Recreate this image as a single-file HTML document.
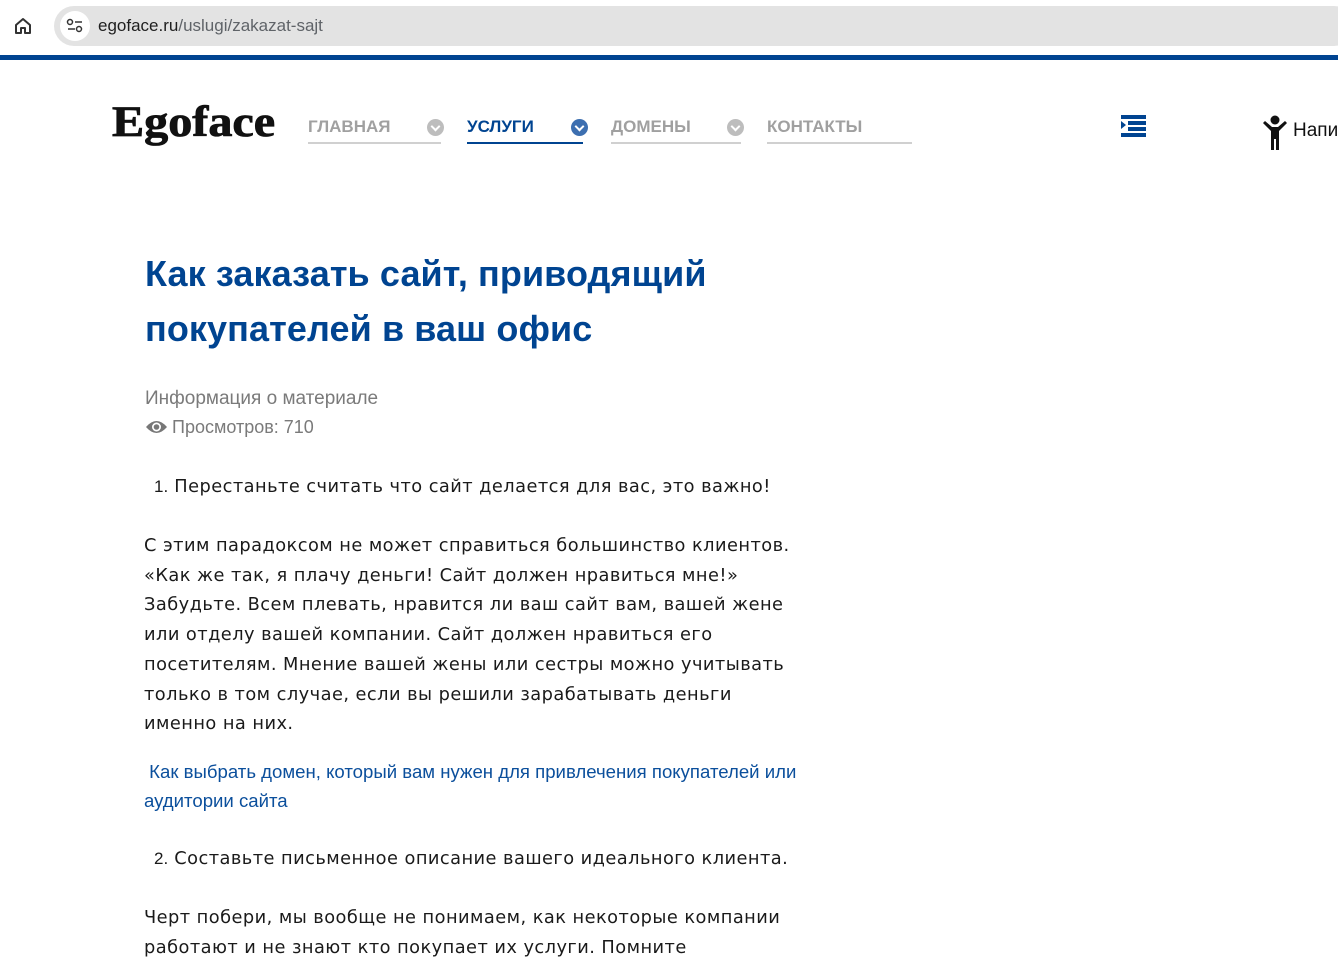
<!DOCTYPE html>
<html><head><meta charset="utf-8"><style>
body{margin:0;width:1338px;height:967px;overflow:hidden;background:#fff;font-family:"Liberation Sans",sans-serif;position:relative}
.abs{position:absolute}
.bar{left:0;top:0;width:1338px;height:55px;background:#fff}
.url{left:54px;top:6px;width:1300px;height:40px;border-radius:20px;background:#e3e3e3}
.urltxt{left:98px;top:16px;font-size:17px;color:#1f1f1f}
.urltxt span{color:#5f6368}
.blue{left:0;top:55px;width:1338px;height:5px;background:#004491}
.nav{top:117px;font-size:17px;font-weight:bold;color:#a0a0a0}
.ul{top:142px;height:2px;background:#d0d0d0}
.dot{top:119px;width:17px;height:17px;border-radius:50%;background:#bdbdbd}
.dot:after{content:"";position:absolute;left:5px;top:4px;width:5px;height:5px;border-right:2px solid #fff;border-bottom:2px solid #fff;transform:rotate(45deg)}
h1{position:absolute;left:145px;top:246px;margin:0;font-size:36px;line-height:55px;color:#004491;font-weight:bold;letter-spacing:0.1px}
.meta{left:145px;font-size:19px;color:#7a7a7a}
.body{left:144px;width:665px;font-family:"DejaVu Sans",sans-serif;font-size:17.8px;line-height:29.7px;color:#1a1a1a;letter-spacing:0.45px}
.link{left:144px;width:680px;font-size:18.6px;line-height:29px;color:#0b4f9c}
</style></head><body>
<div class="abs bar"></div>
<svg class="abs" style="left:14px;top:17px" width="18" height="18" viewBox="0 0 18 18"><path d="M2 8 L9 2 L16 8 V16 H11 V11 H7 V16 H2 Z" fill="none" stroke="#333" stroke-width="2" stroke-linejoin="round"/></svg>
<div class="abs url"></div>
<div class="abs" style="left:60px;top:11px;width:30px;height:30px;border-radius:50%;background:#fff"></div>
<svg class="abs" style="left:66px;top:18px" width="18" height="16" viewBox="0 0 18 16"><circle cx="4" cy="4" r="2.5" fill="none" stroke="#333" stroke-width="1.5"/><line x1="9" y1="4" x2="16" y2="4" stroke="#333" stroke-width="1.5"/><circle cx="13" cy="11" r="2.5" fill="none" stroke="#333" stroke-width="1.5"/><line x1="2" y1="11" x2="9" y2="11" stroke="#333" stroke-width="1.5"/></svg>
<div class="abs urltxt">egoface.ru<span>/uslugi/zakazat-sajt</span></div>
<div class="abs blue"></div>

<div class="abs" style="left:112px;top:98px;font-family:'Liberation Serif',serif;font-weight:bold;font-size:43px;color:#111;transform:scaleX(1.12);transform-origin:left top;-webkit-text-stroke:0.8px #111">Egoface</div>

<div class="abs nav" style="left:308px">ГЛАВНАЯ</div>
<div class="abs dot" style="left:427px"></div>
<div class="abs ul" style="left:308px;width:133px"></div>
<div class="abs nav" style="left:467px;color:#004491">УСЛУГИ</div>
<div class="abs dot" style="left:571px;background:#3d6fb0"></div>
<div class="abs ul" style="left:467px;width:116px;background:#004491"></div>
<div class="abs nav" style="left:611px">ДОМЕНЫ</div>
<div class="abs dot" style="left:727px"></div>
<div class="abs ul" style="left:611px;width:130px"></div>
<div class="abs nav" style="left:767px">КОНТАКТЫ</div>
<div class="abs ul" style="left:767px;width:145px"></div>

<svg class="abs" style="left:1121px;top:115px" width="26" height="22" viewBox="0 0 26 22"><rect x="0" y="0" width="25" height="4" fill="#004491"/><rect x="7" y="6" width="18" height="4" fill="#004491"/><rect x="7" y="12" width="18" height="4" fill="#004491"/><rect x="0" y="18" width="25" height="4" fill="#004491"/><path d="M0 6 L5 10 L0 14Z" fill="#004491"/></svg>
<svg class="abs" style="left:1262px;top:115px" width="26" height="36" viewBox="0 0 26 36"><circle cx="13" cy="5" r="4.5" fill="#111"/><path d="M1 8 L3 6 L10 12 H16 L23 6 L25 8 L17 16 V35 H14 V24 H12 V35 H9 V16 Z" fill="#111"/></svg>
<div class="abs" style="left:1293px;top:120px;font-size:19px;color:#111">Напи</div>

<h1>Как заказать сайт, приводящий<br>покупателей в ваш офис</h1>

<div class="abs meta" style="top:388px">Информация о материале</div>
<svg class="abs" style="left:145px;top:419px" width="23" height="16" viewBox="0 0 23 16"><path d="M1 8 Q11.5 -4 22 8 Q11.5 20 1 8Z" fill="#777"/><circle cx="11.5" cy="8" r="4.5" fill="#fff"/><circle cx="11.5" cy="8" r="2.8" fill="#777"/></svg>
<div class="abs meta" style="left:172px;top:417px;font-size:18px">Просмотров: 710</div>

<div class="abs body" style="top:472px;left:154px"><span style="font-family:'Liberation Sans';font-size:17px;letter-spacing:0">1.</span> Перестаньте считать что сайт делается для вас, это важно!</div>
<div class="abs body" style="top:531px">С этим парадоксом не может справиться большинство клиентов. «Как же так, я плачу деньги! Сайт должен нравиться мне!» Забудьте. Всем плевать, нравится ли ваш сайт вам, вашей жене или отделу вашей компании. Сайт должен нравиться его посетителям. Мнение вашей жены или сестры можно учитывать только в том случае, если вы решили зарабатывать деньги именно на них.</div>
<div class="abs link" style="top:757px">&nbsp;Как выбрать домен, который вам нужен для привлечения покупателей или аудитории сайта</div>
<div class="abs body" style="top:844px;left:154px"><span style="font-family:'Liberation Sans';font-size:17px;letter-spacing:0">2.</span> Составьте письменное описание вашего идеального клиента.</div>
<div class="abs body" style="top:903px">Черт побери, мы вообще не понимаем, как некоторые компании работают и не знают кто покупает их услуги. Помните</div>
</body></html>
